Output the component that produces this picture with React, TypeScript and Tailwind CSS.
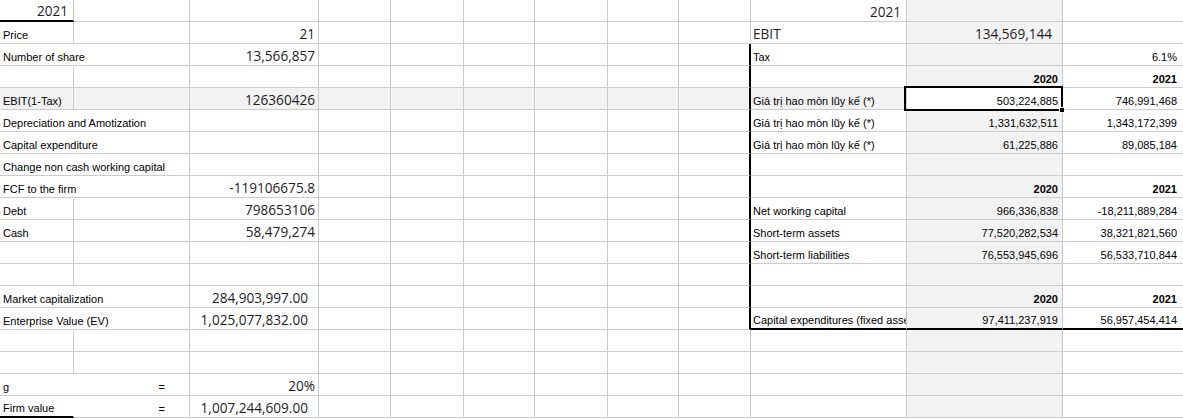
import React from "react";

type Spec = {
  t?: string;
  cls: string;
  sel?: boolean;
};

const GR = "border-r border-r-[#cbcbcb]";
const GRH = "border-r border-r-transparent";
const GRT = "border-r-2 border-r-black";
const GB = "border-b border-b-[#cbcbcb]";
const GBT = "border-b-2 border-b-black";
const LAB = "font-['Liberation_Sans',Arial,sans-serif] text-[11px] leading-[13px] pb-[1px] text-black";
const BIG = "font-['Open_Sans',sans-serif] text-[13.6px] leading-[18px] text-[#1e1e1e]";
const GRAY = "bg-[#f2f2f2]";

const E = (extra = ""): Spec => ({ cls: `${GR} ${GB} ${extra}` });

function row(cells: Partial<Record<number, Spec>>, fill: (i: number) => Spec): Spec[] {
  const out: Spec[] = [];
  for (let i = 0; i < 12; i++) out.push(cells[i] ?? fill(i));
  return out;
}

const defFill = (i: number): Spec => (i === 10 ? E(GRAY) : E());
const boxFill = (i: number): Spec => (i === 8 ? { cls: `${GRT} ${GB}` } : i === 10 ? E(GRAY) : E());

const lbl = (t: string, hide = false, extra = ""): Spec => ({
  t,
  cls: `${hide ? GRH : GR} ${GB} ${LAB} pl-[3px] ${extra}`,
});
const jl = (t: string, extra = ""): Spec => ({ t, cls: `${GR} ${GB} ${LAB} pl-[2px] ${extra}` });
const bigR = (t: string, pr: string, extra = ""): Spec => ({
  t,
  cls: `${GR} ${GB} ${BIG} justify-end ${pr} ${extra}`,
});
const kNum = (t: string, bold = false, extra = ""): Spec => ({
  t,
  cls: `${GR} ${GB} ${LAB} justify-end pr-[4px] ${bold ? "font-bold" : ""} ${GRAY} ${extra}`,
});
const lNum = (t: string, bold = false, extra = ""): Spec => ({
  t,
  cls: `${GR} ${GB} ${LAB} justify-end pr-[6px] ${bold ? "font-bold" : ""} ${extra}`,
});

const rows: Spec[][] = [
  row(
    {
      0: { t: "2021", cls: `${GR} ${GBT} ${BIG} justify-end pr-[5px]` },
      9: bigR("2021", "pr-[5px]"),
    },
    defFill
  ),
  row(
    {
      0: lbl("Price"),
      2: bigR("21", "pr-[3px]"),
      9: { t: "EBIT", cls: `${GR} ${GB} ${BIG} pl-[2px]` },
      10: bigR("134,569,144", "pr-[10px]", GRAY),
    },
    defFill
  ),
  row(
    {
      0: lbl("Number of share", true),
      2: bigR("13,566,857", "pr-[3px]"),
      9: jl("Tax"),
      11: lNum("6.1%"),
    },
    boxFill
  ),
  row({ 10: kNum("2020", true), 11: lNum("2021", true) }, boxFill),
  row(
    {
      0: lbl("EBIT(1-Tax)", false, GRAY),
      2: bigR("126360426", "pr-[3px]", GRAY),
      8: { cls: `${GRT} ${GB} ${GRAY}` },
      9: jl("Giá trị hao mòn lũy kế (*)", GRAY),
      10: {
        t: "503,224,885",
        cls: `${GR} ${GB} ${LAB} justify-end pr-[4px] bg-white relative`,
        sel: true,
      },
      11: lNum("746,991,468"),
    },
    (i) => (i === 11 ? E() : E(GRAY))
  ),
  row(
    {
      0: lbl("Depreciation and Amotization", true),
      9: jl("Giá trị hao mòn lũy kế (*)"),
      10: kNum("1,331,632,511"),
      11: lNum("1,343,172,399"),
    },
    boxFill
  ),
  row(
    {
      0: lbl("Capital expenditure", true),
      9: jl("Giá trị hao mòn lũy kế (*)"),
      10: kNum("61,225,886"),
      11: lNum("89,085,184"),
    },
    boxFill
  ),
  row({ 0: lbl("Change non cash working capital", true) }, boxFill),
  row(
    {
      0: lbl("FCF to the firm", true),
      2: bigR("-119106675.8", "pr-[3px]"),
      10: kNum("2020", true),
      11: lNum("2021", true),
    },
    boxFill
  ),
  row(
    {
      0: lbl("Debt"),
      2: bigR("798653106", "pr-[3px]"),
      9: jl("Net working capital"),
      10: kNum("966,336,838"),
      11: lNum("-18,211,889,284"),
    },
    boxFill
  ),
  row(
    {
      0: lbl("Cash"),
      2: bigR("58,479,274", "pr-[3px]"),
      9: jl("Short-term assets"),
      10: kNum("77,520,282,534"),
      11: lNum("38,321,821,560"),
    },
    boxFill
  ),
  row(
    {
      9: jl("Short-term liabilities"),
      10: kNum("76,553,945,696"),
      11: lNum("56,533,710,844"),
    },
    boxFill
  ),
  row({}, boxFill),
  row(
    {
      0: lbl("Market capitalization", true),
      2: bigR("284,903,997.00", "pr-[10px]"),
      10: kNum("2020", true),
      11: lNum("2021", true),
    },
    boxFill
  ),
  row(
    {
      0: lbl("Enterprise Value (EV)", true),
      2: bigR("1,025,077,832.00", "pr-[10px]"),
      9: {
        t: "Capital expenditures (fixed assets)",
        cls: `${GR} ${GBT} ${LAB} pl-[2px] overflow-hidden`,
      },
      10: {
        t: "97,411,237,919",
        cls: `${GR} ${GBT} ${LAB} justify-end pr-[4px] ${GRAY}`,
      },
      11: {
        t: "56,957,454,414",
        cls: `${GR} ${GBT} ${LAB} justify-end pr-[6px]`,
      },
    },
    boxFill
  ),
  row({}, defFill),
  row({}, defFill),
  row(
    {
      0: lbl("g", true),
      1: { t: "=", cls: `${GR} ${GB} ${LAB} justify-end pr-[24px]` },
      2: bigR("20%", "pr-[3px]"),
    },
    defFill
  ),
  row(
    {
      0: { t: "Firm value", cls: `${GRH} ${GBT} ${LAB} pl-[3px]` },
      1: { t: "=", cls: `${GR} ${GB} ${LAB} justify-end pr-[24px]` },
      2: bigR("1,007,244,609.00", "pr-[10px]"),
    },
    defFill
  ),
];

export default function App() {
  return (
    <div className="w-[1183px] h-[419px] overflow-hidden bg-white">
      <div className="grid grid-cols-[74px_116px_129px_72px_73px_71px_73px_71px_72px_156px_156px_121px] auto-rows-[22px] w-[1183px]">
        {rows.map((r, ri) =>
          r.map((c, ci) => (
            <div
              key={`${ri}-${ci}`}
              className={`flex items-end whitespace-nowrap min-w-0 ${c.cls}`}
            >
              {c.t ?? ""}
              {c.sel && (
                <>
                  <div className="absolute left-[-3px] top-[-2px] right-[-1px] bottom-[-2px] border-2 border-black pointer-events-none" />
                  <div className="absolute right-[-3px] bottom-[-4px] w-[6px] h-[6px] bg-black border border-white" />
                </>
              )}
            </div>
          ))
        )}
      </div>
    </div>
  );
}
